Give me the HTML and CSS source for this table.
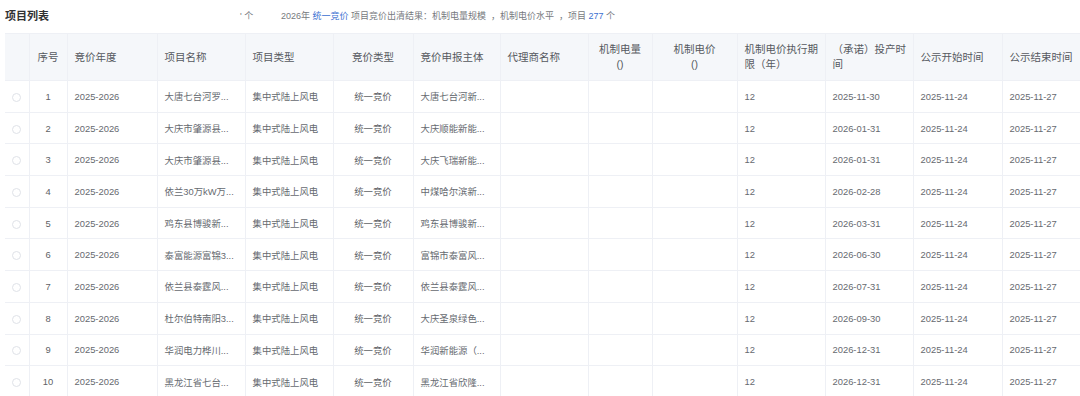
FILE: index.html
```html
<!DOCTYPE html>
<html lang="zh-CN">
<head>
<meta charset="utf-8">
<title>项目列表</title>
<link rel="stylesheet" href="styles.css">
</head>
<body>
<div class="page">
  <div class="topbar">
    <div class="title">项目列表</div>
    <div class="summary">
      <span class="unit">' 个</span>
      <span class="desc">2026年 <span class="link">统一竞价</span> 项目竞价出清结果：机制电量规模 &nbsp;，机制电价水平 &nbsp;，项目 <span class="link">277</span> 个</span>
    </div>
  </div>
  <div class="tablewrap">
  <table class="grid">
    <colgroup>
      <col style="width:24px"><col style="width:38px"><col style="width:90px"><col style="width:88px">
      <col style="width:88px"><col style="width:80px"><col style="width:87px"><col style="width:88px">
      <col style="width:64px"><col style="width:85px"><col style="width:88px"><col style="width:88px">
      <col style="width:89px"><col style="width:88px">
    </colgroup>
    <thead>
      <tr>
        <th></th>
        <th class="c">序号</th>
        <th>竞价年度</th>
        <th>项目名称</th>
        <th>项目类型</th>
        <th class="c">竞价类型</th>
        <th>竞价申报主体</th>
        <th>代理商名称</th>
        <th class="c">机制电量<br>()</th>
        <th class="c">机制电价<br>()</th>
        <th class="tight">机制电价执行期<br>限（年）</th>
        <th class="tight">（承诺）投产时<br>间</th>
        <th>公示开始时间</th>
        <th>公示结束时间</th>
      </tr>
    </thead>
    <tbody>
      <tr><td><span class="radio"></span></td><td class="c">1</td><td>2025-2026</td><td>大唐七台河罗...</td><td>集中式陆上风电</td><td class="c">统一竞价</td><td>大唐七台河新...</td><td></td><td></td><td></td><td>12</td><td>2025-11-30</td><td>2025-11-24</td><td>2025-11-27</td></tr>
      <tr><td><span class="radio"></span></td><td class="c">2</td><td>2025-2026</td><td>大庆市肇源县...</td><td>集中式陆上风电</td><td class="c">统一竞价</td><td>大庆顺能新能...</td><td></td><td></td><td></td><td>12</td><td>2026-01-31</td><td>2025-11-24</td><td>2025-11-27</td></tr>
      <tr><td><span class="radio"></span></td><td class="c">3</td><td>2025-2026</td><td>大庆市肇源县...</td><td>集中式陆上风电</td><td class="c">统一竞价</td><td>大庆飞瑞新能...</td><td></td><td></td><td></td><td>12</td><td>2026-01-31</td><td>2025-11-24</td><td>2025-11-27</td></tr>
      <tr><td><span class="radio"></span></td><td class="c">4</td><td>2025-2026</td><td>依兰30万kW万...</td><td>集中式陆上风电</td><td class="c">统一竞价</td><td>中煤哈尔滨新...</td><td></td><td></td><td></td><td>12</td><td>2026-02-28</td><td>2025-11-24</td><td>2025-11-27</td></tr>
      <tr><td><span class="radio"></span></td><td class="c">5</td><td>2025-2026</td><td>鸡东县博骏新...</td><td>集中式陆上风电</td><td class="c">统一竞价</td><td>鸡东县博骏新...</td><td></td><td></td><td></td><td>12</td><td>2026-03-31</td><td>2025-11-24</td><td>2025-11-27</td></tr>
      <tr><td><span class="radio"></span></td><td class="c">6</td><td>2025-2026</td><td>泰富能源富锦3...</td><td>集中式陆上风电</td><td class="c">统一竞价</td><td>富锦市泰富风...</td><td></td><td></td><td></td><td>12</td><td>2026-06-30</td><td>2025-11-24</td><td>2025-11-27</td></tr>
      <tr><td><span class="radio"></span></td><td class="c">7</td><td>2025-2026</td><td>依兰县泰霆风...</td><td>集中式陆上风电</td><td class="c">统一竞价</td><td>依兰县泰霆风...</td><td></td><td></td><td></td><td>12</td><td>2026-07-31</td><td>2025-11-24</td><td>2025-11-27</td></tr>
      <tr><td><span class="radio"></span></td><td class="c">8</td><td>2025-2026</td><td>杜尔伯特南阳3...</td><td>集中式陆上风电</td><td class="c">统一竞价</td><td>大庆圣泉绿色...</td><td></td><td></td><td></td><td>12</td><td>2026-09-30</td><td>2025-11-24</td><td>2025-11-27</td></tr>
      <tr><td><span class="radio"></span></td><td class="c">9</td><td>2025-2026</td><td>华润电力桦川...</td><td>集中式陆上风电</td><td class="c">统一竞价</td><td>华润新能源（...</td><td></td><td></td><td></td><td>12</td><td>2026-12-31</td><td>2025-11-24</td><td>2025-11-27</td></tr>
      <tr><td><span class="radio"></span></td><td class="c">10</td><td>2025-2026</td><td>黑龙江省七台...</td><td>集中式陆上风电</td><td class="c">统一竞价</td><td>黑龙江省欣隆...</td><td></td><td></td><td></td><td>12</td><td>2026-12-31</td><td>2025-11-24</td><td>2025-11-27</td></tr>
    </tbody>
  </table>
  </div>
</div>
</body>
</html>
```
FILE: styles.css
```css
html, body {
  margin: 0;
  padding: 0;
  background: #ffffff;
  overflow: hidden;
}
body {
  font-family: "Liberation Sans", "Noto Sans CJK SC", sans-serif;
  color: #606266;
}
.page {
  padding-left: 5px;
  width: 1080px;
  box-sizing: border-box;
  overflow: hidden;
}
.topbar {
  height: 33px;
  display: flex;
  align-items: center;
  padding-bottom: 3px;
  box-sizing: border-box;
}
.title {
  font-size: 11px;
  font-weight: bold;
  color: #303133;
  width: 235px;
}
.summary {
  font-size: 9px;
  color: #777a80;
  display: flex;
  align-items: center;
}
.unit {
  width: 41px;
}
.link {
  color: #3b6fd1;
}
.tablewrap {
  overflow: hidden;
}
.grid {
  border-collapse: collapse;
  table-layout: fixed;
  width: 1085px;
}
.grid th,
.grid td {
  border: 1px solid #eef0f5;
  text-align: left;
  white-space: nowrap;
  overflow: hidden;
  padding: 0 0 0 7px;
}
.grid th {
  background: #f5f7fa;
  height: 46px;
  font-size: 10.5px;
  font-weight: normal;
  color: #555960;
  line-height: 15px;
  white-space: normal;
  padding-right: 8px;
}
.grid th.tight {
  padding-right: 0;
  white-space: nowrap;
}
.grid td {
  height: 30.7px;
  font-size: 9.4px;
  color: #666a70;
}
.grid thead tr th:first-child {
  border-left: none;
}
.grid tbody tr td:first-child {
  border-left: none;
  padding: 0;
  text-align: center;
}
.grid th.c,
.grid td.c {
  text-align: center;
  padding: 0;
}
.grid td.c {
  color: #606266;
}
.radio {
  display: inline-block;
  width: 9px;
  height: 9px;
  border: 1px solid #dfe2e8;
  border-radius: 50%;
  box-sizing: border-box;
  vertical-align: middle;
}
```
